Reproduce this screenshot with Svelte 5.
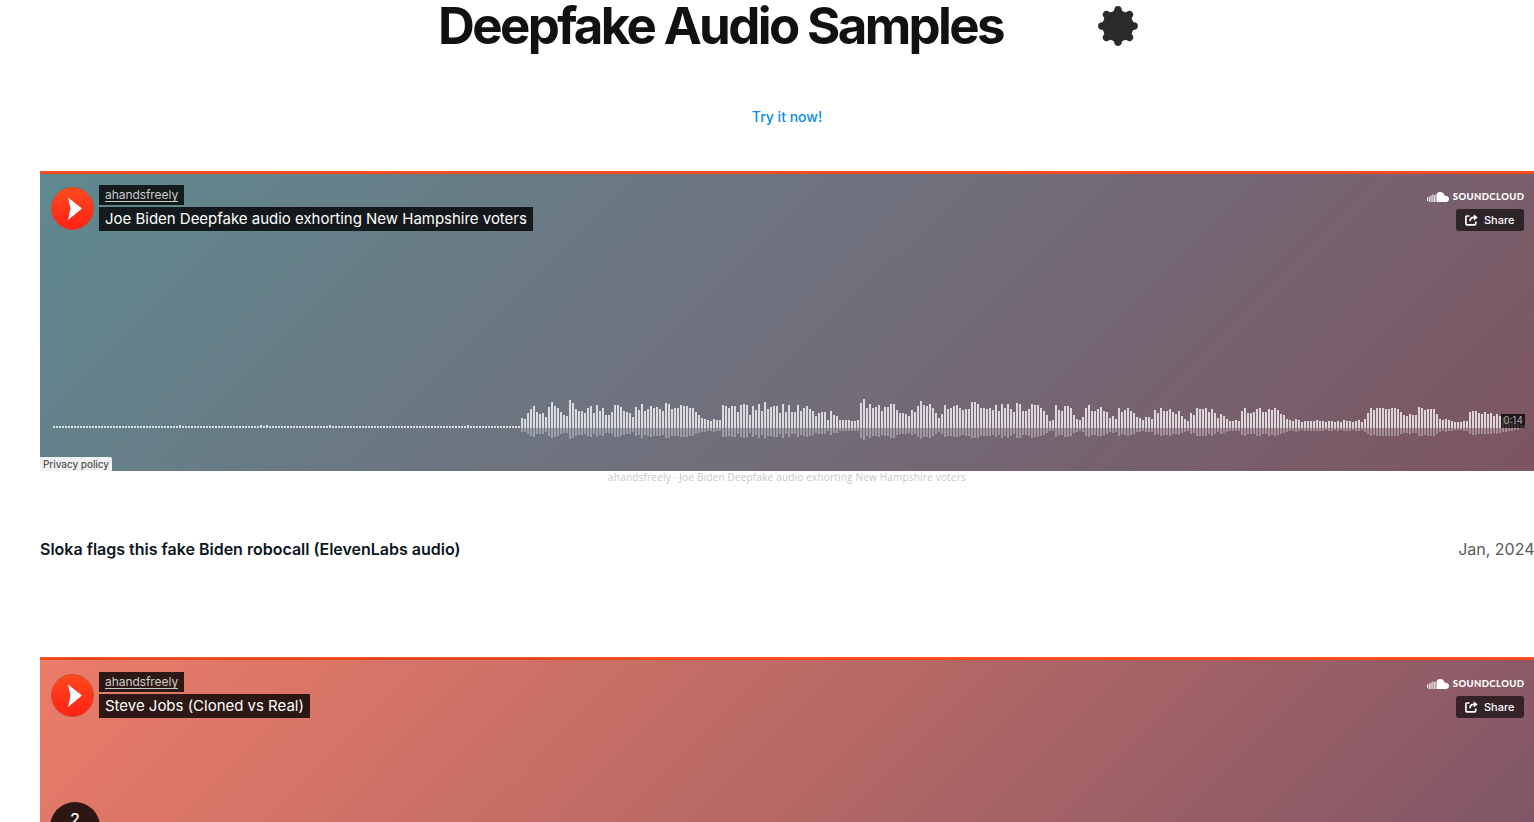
<script lang="ts">
  interface Track {
    id: string;
    user: string;
    title: string;
  }

  const tracks: Track[] = [
    {
      id: 'biden',
      user: 'ahandsfreely',
      title: 'Joe Biden Deepfake audio exhorting New Hampshire voters',
    },
    { id: 'jobs', user: 'ahandsfreely', title: 'Steve Jobs (Cloned vs Real)' },
  ];

  // Near-silent intro, with a few slightly louder samples
  const blips = [42, 69, 71, 92, 138];
  const intro = Array.from({ length: 156 }, (_, i) => (blips.includes(i) ? 3 : 2));

  const speech = [
    10, 9, 15, 19, 22, 16, 14, 15, 11, 21, 26, 22, 20, 16, 13, 12, 28, 25, 19, 17, 17, 15, 20, 22,
    15, 23, 17, 20, 13, 13, 16, 23, 23, 21, 17, 16, 15, 11, 21, 18, 24, 17, 19, 22, 20, 21, 19, 17,
    25, 24, 19, 20, 20, 23, 22, 22, 20, 20, 16, 13, 10, 9, 8, 7, 9, 8, 8, 23, 22, 20, 22, 22, 16,
    23, 24, 23, 13, 22, 18, 24, 17, 26, 19, 21, 22, 22, 15, 24, 16, 23, 16, 16, 23, 17, 20, 22, 19,
    17, 12, 15, 16, 16, 8, 17, 13, 12, 8, 8, 8, 8, 7, 7, 8, 25, 29, 20, 24, 20, 21, 23, 17, 21, 21,
    24, 24, 18, 15, 15, 14, 12, 18, 16, 22, 27, 23, 22, 24, 20, 15, 10, 14, 23, 19, 20, 22, 23, 20,
    18, 19, 19, 26, 26, 24, 20, 20, 19, 20, 18, 23, 17, 24, 20, 24, 19, 16, 25, 24, 17, 17, 19, 24,
    23, 23, 20, 17, 13, 7, 8, 23, 18, 17, 22, 22, 20, 13, 9, 8, 11, 20, 23, 17, 17, 19, 21, 17, 16,
    10, 12, 9, 20, 16, 18, 20, 17, 15, 11, 10, 8, 11, 11, 9, 18, 15, 20, 17, 17, 19, 16, 14, 17, 12,
    9, 7, 15, 13, 20, 19, 19, 20, 16, 19, 15, 10, 14, 12, 9, 7, 7, 8, 7, 17, 20, 15, 15, 16, 19, 20,
    16, 16, 19, 18, 20, 18, 14, 13, 9, 8, 7, 9, 8, 6, 7, 7, 7, 7, 8, 7, 7, 6, 7, 7, 6, 7, 6, 8, 7,
    7, 6, 7, 8, 6, 9, 15, 20, 18, 20, 20, 20, 19, 19, 20, 20, 19, 16, 13, 12, 14, 13, 13, 21, 20,
    18, 19, 19, 19, 14, 9, 8, 9, 8, 7, 6, 6, 6, 7, 7, 16, 17, 17, 15, 14, 16, 14, 15, 12, 14, 12,
    11, 10, 8, 7, 6, 5, 3, 3,
  ];

  const samples = [...intro, ...speech];
</script>

{#snippet player(track: Track)}
  <section class="player {track.id}">
    <header>
      <button class="play" aria-label="Play">
        <svg width="44" height="44" viewBox="0 0 44 44">
          <defs>
            <linearGradient id="play-{track.id}" x1="0" y1="0" x2="0" y2="1">
              <stop offset="0" stop-color="#ff4a1c" />
              <stop offset="1" stop-color="#ff2018" />
            </linearGradient>
          </defs>
          <circle cx="21.5" cy="21.5" r="21" fill="url(#play-{track.id})" stroke="#cc4b2c" stroke-width="1" />
          <path d="M17 10.5L31 21.6L17 33L19.5 21.6Z" fill="#fff" />
        </svg>
      </button>
      <div class="titles">
        <a class="user" href="#user">{track.user}</a>
        <h2>{track.title}</h2>
      </div>
      <div class="actions">
        <div class="logo">
          <svg width="22" height="11" viewBox="0 0 22 11" fill="#fff">
            <path d="M0 5.500h1v3.500H0zM1.800 4.500h1V10h-1zM3.600 3.500h1V10h-1zM5.400 2.500h1V10h-1zM7.200 3h1v7h-1zM8.800 2h.8v8h-.8z" />
            <path d="M10 1.200C11.200.2 12.300 0 13.300 0c2.400 0 4.200 1.800 4.500 4C20 3.400 22 4.900 22 7s-1.500 3-3 3H10z" />
          </svg>
          <span>SOUNDCLOUD</span>
        </div>
        <button class="share">
          <svg width="14" height="12" viewBox="0 0 14 12" fill="none" stroke="#fff">
            <path d="M4.500 2H2Q.9 2 .9 3.100V9.800Q.9 10.900 2 10.900H9.600Q10.700 10.900 10.700 9.800V7.500" stroke-width="1.700" />
            <path d="M5 7.300C5 4.800 6.500 3.400 9 3.400" stroke-width="1.700" />
            <path d="M8.800 .3L12.700 3.400L8.800 6.500Z" fill="#fff" stroke="none" />
          </svg>
          Share
        </button>
      </div>
    </header>
    {#if track.id === 'biden'}
      <div class="wave">
        <svg width="1473" height="44" viewBox="0 0 1473 44" shape-rendering="crispEdges" fill="#fff">
          {#each samples as h, i}
            <rect x={i * 3} y={30 - h} width="2" height={h} fill-opacity="0.75" />
            {#if h > 3}
              <rect x={i * 3} y="30" width="2" height={Math.round(h * 0.4)} fill-opacity="0.32" />
            {/if}
          {/each}
        </svg>
        <span class="time">0:14</span>
      </div>
      <a class="privacy" href="#privacy">Privacy policy</a>
    {:else}
      <div class="comments">2</div>
    {/if}
  </section>
{/snippet}

<main>
  <div class="heading">
    <h1>Deepfake Audio Samples</h1>
    <svg class="gear" width="40" height="40" viewBox="-20 -20 40 40" fill="#2b2b2b">
      <circle r="15.500" />
      {#each [0, 45, 90, 135, 180, 225, 270, 315] as angle}
        <path
          transform="rotate({angle})"
          d="M-7.500 -12C-4.500 -14 -4 -15 -3.800 -16.500C-3.500 -21.100 3.500 -21.100 3.800 -16.500C4 -15 4.500 -14 7.500 -12Z"
        />
      {/each}
    </svg>
  </div>

  <a class="try" href="#try">Try it now!</a>

  {@render player(tracks[0])}
  <p class="credit">{tracks[0].user} · {tracks[0].title}</p>

  <div class="caption">
    <strong>Sloka flags this fake Biden robocall (ElevenLabs audio)</strong>
    <time>Jan, 2024</time>
  </div>

  {@render player(tracks[1])}
</main>

<style>
  :global(body) {
    margin: 0;
    overflow: hidden;
    background: #fff;
  }

  main {
    display: flex;
    flex-direction: column;
    height: 822px;
    padding-left: 40px;
    overflow: hidden;
    font-family: Inter, sans-serif;
  }

  main > * {
    flex-shrink: 0;
  }

  .heading {
    display: flex;
    align-items: center;
    height: 52px;
    padding-left: 398px;
  }

  h1 {
    width: 660px;
    margin: 0;
    font-size: 51px;
    line-height: 52px;
    font-weight: 700;
    letter-spacing: -2.65px;
    color: #111;
    white-space: nowrap;
  }

  .try {
    align-self: center;
    margin: 55px 0 44px;
    font-size: 14px;
    line-height: 20px;
    font-weight: 500;
    color: #0b8bee;
    text-decoration: none;
  }

  .player {
    box-sizing: border-box;
    display: flex;
    flex-direction: column;
    height: 300px;
    color: #fff;
  }

  .player::before {
    content: '';
    flex: none;
    height: 3px;
    background: linear-gradient(#ff5b25, #f3401c);
  }

  .biden {
    background: linear-gradient(135deg, #5f898f 0%, #70707d 50%, #7d5461 100%);
  }

  .jobs {
    background: linear-gradient(135deg, #ec7c68 0%, #b56865 50%, #765368 100%);
  }

  header {
    display: flex;
    align-items: flex-start;
    padding: 11px 10px 0 11px;
  }

  .jobs header {
    padding-top: 12px;
  }

  button {
    border: 0;
    padding: 0;
    background: none;
    font-family: inherit;
    color: inherit;
  }

  .play {
    width: 44px;
    height: 44px;
    margin-top: 2px;
  }

  .play svg {
    display: block;
  }

  .titles {
    display: flex;
    flex: 1;
    flex-direction: column;
    align-items: flex-start;
    gap: 2px;
    margin-left: 4px;
  }

  .user {
    padding: 0 6px;
    background: rgb(0 0 0 / 80%);
    font-size: 12px;
    line-height: 20px;
    letter-spacing: -0.06px;
    color: #ccc;
    text-underline-offset: 2px;
  }

  h2 {
    margin: 0;
    padding: 0 6px;
    background: rgb(0 0 0 / 80%);
    font-size: 15px;
    line-height: 24px;
    font-weight: 400;
    letter-spacing: -0.015px;
  }

  .actions {
    display: flex;
    flex-direction: column;
    align-items: flex-end;
    gap: 7px;
    padding-top: 7px;
  }

  .logo {
    display: flex;
    align-items: center;
    gap: 4px;
    height: 10px;
    font-family: Lato, sans-serif;
    font-size: 9.5px;
    font-weight: 900;
    letter-spacing: 0.4px;
  }

  .logo span {
    margin-right: -0.4px;
    line-height: 10px;
  }

  .share {
    display: flex;
    align-items: center;
    gap: 5px;
    width: 68px;
    height: 22px;
    padding-left: 9px;
    border-radius: 3px;
    background: rgb(0 0 0 / 62%);
    font-size: 11px;
    font-weight: 500;
  }

  .wave {
    display: flex;
    align-items: flex-start;
    margin: auto 9px 0 13px;
    height: 44px;
  }

  .wave svg {
    flex: none;
  }

  .time {
    position: relative;
    z-index: 1;
    width: 24px;
    height: 14px;
    margin: 16px 0 0 -25px;
    background: rgb(0 0 0 / 75%);
    font-size: 10px;
    line-height: 13px;
    color: #aaa;
    text-align: center;
  }

  .privacy {
    align-self: flex-start;
    height: 14px;
    margin-top: 15px;
    padding: 0 3px;
    border-top-right-radius: 2px;
    background: #f2f2f2;
    font-size: 10px;
    line-height: 15px;
    font-weight: 500;
    letter-spacing: -0.06px;
    color: #555;
    text-decoration: none;
  }

  .credit {
    height: 13px;
    margin: 0;
    font-family: 'Open Sans', sans-serif;
    font-size: 10px;
    line-height: 13px;
    letter-spacing: 0.19px;
    color: #c8c8c8;
    text-align: center;
  }

  .caption {
    display: flex;
    justify-content: space-between;
    margin: 54px 0 96px;
    font-size: 16px;
    line-height: 23px;
  }

  .caption strong {
    font-weight: 600;
    color: #0a1621;
  }

  .caption time {
    margin-right: -0.5px;
    color: #5a5a5a;
  }

  .comments {
    width: 50px;
    height: 50px;
    margin: 84px 0 0 10px;
    border-radius: 50%;
    background: #2d1714;
    font-size: 16px;
    line-height: 35px;
    font-weight: 500;
    text-align: center;
  }
</style>
